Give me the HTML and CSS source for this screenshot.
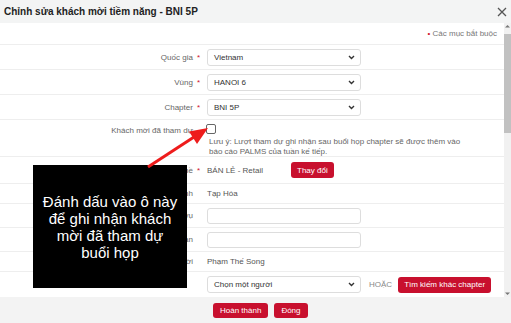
FILE: index.html
```html
<!DOCTYPE html>
<html lang="vi">
<head>
    <meta charset="UTF-8">
    <meta name="viewport" content="width=device-width, initial-scale=1.0">
    <title>Chỉnh sửa khách mời tiềm năng - BNI 5P</title>
    <link rel="stylesheet" href="styles.css">
</head>
<body>
    <div class="dialog">
        <div class="dialog-header">
            <h1>Chỉnh sửa khách mời tiềm năng - BNI 5P</h1>
            <button class="close" type="button" aria-label="Đóng">
                <svg width="10" height="10" viewBox="0 0 10 10"><path d="M1 1L9 9M9 1L1 9" stroke="#555" stroke-width="1.3" fill="none"/></svg>
            </button>
        </div>

        <div class="dialog-body">
            <form class="form">
                <div class="row row-required">
                    <span class="star">•</span>&nbsp;Các mục bắt buộc
                </div>

                <div class="row">
                    <label class="label">Quốc gia<span class="star">*</span></label>
                    <div class="value">
                        <div class="select">
                            <span>Vietnam</span>
                            <svg width="7" height="5" viewBox="0 0 7 5"><path d="M1 1L3.5 3.5L6 1" stroke="#333" stroke-width="1.4" fill="none"/></svg>
                        </div>
                    </div>
                </div>

                <div class="row">
                    <label class="label">Vùng<span class="star">*</span></label>
                    <div class="value">
                        <div class="select">
                            <span>HANOI 6</span>
                            <svg width="7" height="5" viewBox="0 0 7 5"><path d="M1 1L3.5 3.5L6 1" stroke="#333" stroke-width="1.4" fill="none"/></svg>
                        </div>
                    </div>
                </div>

                <div class="row">
                    <label class="label">Chapter<span class="star">*</span></label>
                    <div class="value">
                        <div class="select">
                            <span>BNI 5P</span>
                            <svg width="7" height="5" viewBox="0 0 7 5"><path d="M1 1L3.5 3.5L6 1" stroke="#333" stroke-width="1.4" fill="none"/></svg>
                        </div>
                    </div>
                </div>

                <div class="row row-attended">
                    <label class="label">Khách mời đã tham dự</label>
                    <div class="value value-stack">
                        <input type="checkbox" class="checkbox">
                        <p class="note">Lưu ý: Lượt tham dự ghi nhận sau buổi họp chapter sẽ được thêm vào báo cáo PALMS của tuần kế tiếp.</p>
                    </div>
                </div>

                <div class="row row-industry">
                    <label class="label">Ngành nghề<span class="star">*</span></label>
                    <div class="value">
                        <span class="text">BÁN LẺ - Retail</span>
                        <button type="button" class="btn btn-change">Thay đổi</button>
                    </div>
                </div>

                <div class="row row-text">
                    <label class="label">Chuyên ngành</label>
                    <div class="value"><span class="text">Tạp Hóa</span></div>
                </div>

                <div class="row row-input">
                    <label class="label">Dịch vụ</label>
                    <div class="value"><input type="text" class="input"></div>
                </div>

                <div class="row row-input">
                    <label class="label">Cơ quan</label>
                    <div class="value"><input type="text" class="input"></div>
                </div>

                <div class="row row-text">
                    <label class="label">Người mời</label>
                    <div class="value"><span class="text">Phạm Thế Song</span></div>
                </div>

                <div class="row row-last">
                    <label class="label"></label>
                    <div class="value">
                        <div class="select">
                            <span>Chọn một người</span>
                            <svg width="7" height="5" viewBox="0 0 7 5"><path d="M1 1L3.5 3.5L6 1" stroke="#333" stroke-width="1.4" fill="none"/></svg>
                        </div>
                        <span class="or">HOẶC</span>
                        <button type="button" class="btn">Tìm kiếm khác chapter</button>
                    </div>
                </div>
            </form>

            <div class="scrollbar">
                <svg width="7" height="6" viewBox="0 0 7 6"><path d="M1 4.5L3.5 2L6 4.5Z" fill="#777"/></svg>
                <div class="scroll-thumb"></div>
                <div class="scroll-track"></div>
                <svg width="7" height="6" viewBox="0 0 7 6"><path d="M1 1.5L3.5 4L6 1.5Z" fill="#777"/></svg>
            </div>
        </div>

        <div class="dialog-footer">
            <button type="button" class="btn btn-footer">Hoàn thành</button>
            <button type="button" class="btn btn-footer">Đóng</button>
        </div>

        <div class="callout">Đánh dấu vào ô này<br>để ghi nhận khách<br>mời đã tham dự<br>buổi họp</div>

        <svg class="arrow" width="511" height="323" viewBox="0 0 511 323">
            <line x1="148" y1="167" x2="194" y2="137" stroke="#ee1c1c" stroke-width="3"/>
            <polygon points="208,128 189,131.5 197,144" fill="#ee1c1c"/>
        </svg>
    </div>
</body>
</html>
```

FILE: styles.css
```css
body {
    margin: 0;
    font-family: "Liberation Sans", Arial, sans-serif;
    background: #fff;
}
.dialog {
    position: relative;
    width: 511px;
    height: 323px;
    overflow: hidden;
    display: flex;
    flex-direction: column;
}
.dialog-header {
    height: 23px;
    background: #f3f4f4;
    display: flex;
    align-items: center;
    justify-content: space-between;
    padding: 0 3px 0 4px;
}
.dialog-header h1 {
    margin: 0;
    font-size: 10px;
    font-weight: bold;
    color: #222;
}
.close {
    border: none;
    background: none;
    padding: 0;
    width: 12px;
    height: 12px;
    display: flex;
    align-items: center;
    justify-content: center;
}
.dialog-body {
    height: 274px;
    display: flex;
}
.form {
    flex: 1;
    margin: 0;
}
.row {
    display: flex;
    align-items: center;
    height: 24px;
    border-bottom: 1px solid #eeeeee;
    font-size: 8px;
    color: #333;
}
.row-required {
    height: 21px;
    justify-content: flex-end;
    padding-right: 7px;
    color: #777;
}
.star {
    color: #d0142c;
    margin-left: 4px;
    margin-right: -7px;
}
.row-required .star {
    margin: 0;
}
.label {
    width: 193px;
    flex: none;
    text-align: right;
    color: #666;
}
.value {
    margin-left: 14px;
    display: flex;
    align-items: center;
}
.select {
    width: 154px;
    height: 17px;
    box-sizing: border-box;
    border: 1px solid #dddddd;
    border-radius: 3px;
    display: flex;
    align-items: center;
    justify-content: space-between;
    padding: 0 5px 0 6px;
    color: #333;
    background: #fff;
}
.row-attended {
    height: 36px;
    align-items: flex-start;
}
.row-attended .label {
    margin-top: 6px;
}
.value-stack {
    flex-direction: column;
    align-items: flex-start;
    margin-left: 13px;
}
.checkbox {
    appearance: none;
    margin: 4px 0 0 0;
    width: 10px;
    height: 10px;
    box-sizing: border-box;
    border: 1px solid #666;
    border-radius: 2px;
    background: #fff;
}
.note {
    margin: 3px 0 0 3px;
    width: 262px;
    line-height: 9.5px;
    color: #666;
}
.row-industry {
    height: 26px;
}
.text {
    color: #555;
}
.btn {
    border: none;
    background: #c8102e;
    color: #fff;
    font-family: "Liberation Sans", Arial, sans-serif;
    font-size: 8px;
    height: 16px;
    padding: 0 6px;
    border-radius: 3px;
}
.btn-change {
    margin-left: 28px;
}
.row-text {
    height: 19px;
}
.row-input {
    height: 23px;
}
.input {
    width: 154px;
    height: 16px;
    box-sizing: border-box;
    border: 1px solid #dddddd;
    border-radius: 3px;
    margin: 0;
}
.row-last {
    height: 25px;
    border-bottom: none;
}
.or {
    color: #888;
    margin: 0 6px 0 8px;
}
.scrollbar {
    width: 7px;
    background: #f1f1f1;
    display: flex;
    flex-direction: column;
    align-items: center;
}
.scroll-thumb {
    width: 7px;
    height: 99px;
    margin-top: 5px;
    background: #c1c1c1;
}
.scroll-track {
    flex: 1;
}
.dialog-footer {
    flex: 1;
    background: #f3f3f3;
    display: flex;
    align-items: flex-start;
    gap: 6px;
    padding: 6px 0 0 213px;
}
.btn-footer {
    height: 15px;
    padding: 0 7px;
}
.callout {
    position: absolute;
    left: 33px;
    top: 165px;
    width: 154px;
    height: 123px;
    background: #000;
    color: #fff;
    font-size: 15px;
    line-height: 17px;
    text-align: center;
    display: flex;
    align-items: center;
    justify-content: center;
}
.arrow {
    position: absolute;
    left: 0;
    top: 0;
    pointer-events: none;
}
```
